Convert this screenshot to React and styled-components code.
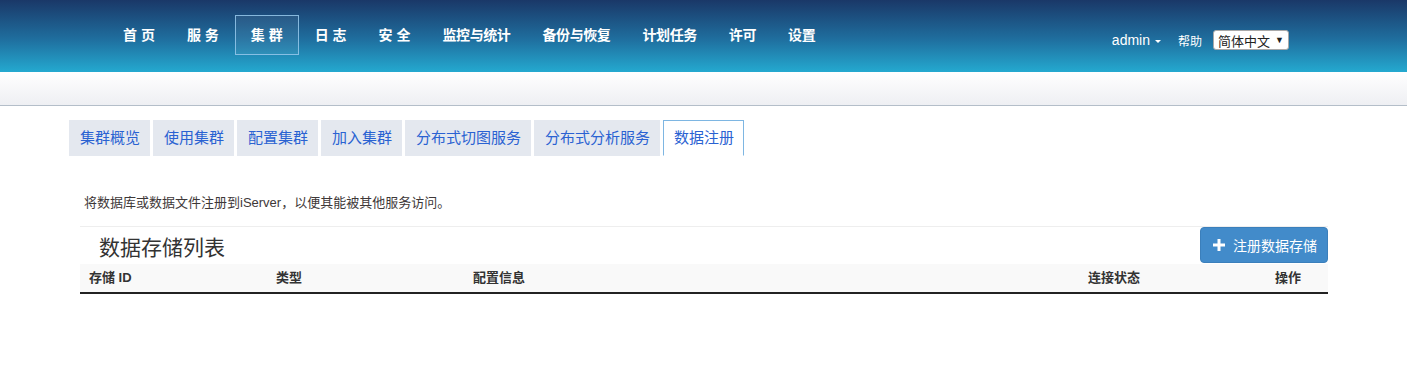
import styled, { createGlobalStyle } from 'styled-components';

const GlobalStyle = createGlobalStyle`
  body {
    margin: 0;
    font-family: "Liberation Sans", "Noto Sans CJK SC", sans-serif;
    font-size: 13px;
    color: #333;
    background: #fff;
  }
`;

const Header = styled.header`
  height: 72px;
  display: flex;
  align-items: center;
  padding: 0 118px 0 107px;
  background: linear-gradient(to bottom, #1a3868 0%, #1f6f9f 55%, #24a9d0 100%);
`;

const Nav = styled.nav`
  display: flex;
  align-items: center;
  margin-top: -2px;
`;

const NavItem = styled.a`
  display: block;
  height: 40px;
  line-height: 38px;
  padding: 0 15px;
  box-sizing: border-box;
  color: #fff;
  font-weight: bold;
  font-size: 14px;
  letter-spacing: ${p => (p.$spaced ? 0 : -0.4)}px;
  white-space: pre;
  border: 1px solid ${p => (p.$active ? 'rgba(150, 200, 235, 0.85)' : 'transparent')};
  background: ${p => (p.$active ? 'rgba(255, 255, 255, 0.06)' : 'transparent')};
  cursor: pointer;
`;

const Right = styled.div`
  margin-left: auto;
  display: flex;
  align-items: center;
  margin-top: 8px;
  color: #fff;
`;

const User = styled.span`
  font-size: 14px;
  display: flex;
  align-items: center;
  gap: 5px;
  margin-right: 17px;
`;

const Caret = styled.span`
  display: inline-block;
  width: 0;
  height: 0;
  border-left: 3px solid transparent;
  border-right: 3px solid transparent;
  border-top: 3px solid #fff;
  margin-top: 2px;
`;

const Help = styled.span`
  font-size: 12px;
  margin-right: 11px;
`;

const LangSelect = styled.div`
  display: flex;
  align-items: center;
  height: 20px;
  width: 76px;
  box-sizing: border-box;
  padding: 0 4px;
  background: #fff;
  border: 1px solid #a9a9a9;
  border-radius: 3px;
  color: #222;
  font-size: 13px;
  justify-content: space-between;
  span:last-child {
    font-size: 9px;
  }
`;

const SubBar = styled.div`
  height: 33px;
  background: linear-gradient(to bottom, #ffffff 0%, #eeeff3 100%);
  border-bottom: 1px solid #b4bec9;
`;

const Tabs = styled.ul`
  list-style: none;
  display: flex;
  gap: 3px;
  margin: 14px 0 0 69px;
  padding: 0;
`;

const Tab = styled.li`
  padding: 7px 9px 7px 10px;
  line-height: 20px;
  font-size: 15px;
  color: #2a62d2;
  background: ${p => (p.$active ? '#fff' : '#e4e8ef')};
  border: 1px solid ${p => (p.$active ? '#7eb6e2' : 'transparent')};
  border-bottom-color: transparent;
  cursor: pointer;
`;

const Panel = styled.section`
  margin: 0 79px 0 80px;
`;

const Desc = styled.p`
  margin: 38px 0 14px 4px;
  font-size: 13px;
  line-height: 18px;
  color: #3e3838;
`;

const Toolbar = styled.div`
  display: flex;
  align-items: center;
  justify-content: space-between;
  border-top: 1px solid #eee;
  height: 36px;
`;

const Title = styled.h3`
  margin: 0 0 0 19px;
  font-size: 21px;
  font-weight: normal;
  color: #333;
  padding-top: 1px;
`;

const PrimaryButton = styled.button`
  display: flex;
  align-items: center;
  gap: 8px;
  height: 36px;
  width: 128px;
  padding: 0 0 0 12px;
  box-sizing: border-box;
  background: #428bca;
  border: 1px solid #3b7fbb;
  border-radius: 4px;
  color: #fff;
  font-family: inherit;
  font-size: 14px;
  white-space: nowrap;
  cursor: pointer;
`;

const Grid = styled.div`
  display: grid;
  grid-template-columns: 186px 197px 615px 187px 63px;
`;

const HeadRow = styled(Grid)`
  background: #f9f9f9;
  border-bottom: 2px solid #222;
  margin-top: 1px;
`;

const Th = styled.div`
  padding: 4px 9px 4px ${p => p.$pl ?? 10}px;
  line-height: 20px;
  font-weight: bold;
  font-size: 13px;
  color: #333;
`;

const PlusIcon = () => (
  <svg width="12" height="12" viewBox="0 0 12 12">
    <rect x="4.5" y="0" width="3" height="12" fill="#fff" />
    <rect x="0" y="4.5" width="12" height="3" fill="#fff" />
  </svg>
);

const navItems = ['首 页', '服 务', '集 群', '日 志', '安 全', '监控与统计', '备份与恢复', '计划任务', '许可', '设置'];
const tabs = ['集群概览', '使用集群', '配置集群', '加入集群', '分布式切图服务', '分布式分析服务', '数据注册'];
const columns = ['存储 ID', '类型', '配置信息', '连接状态', '操作'];

export default function App() {
  return (
    <>
      <GlobalStyle />
      <Header>
        <Nav>
          {navItems.map(item => (
            <NavItem key={item} $active={item === '集 群'} $spaced={item.includes(' ')}>{item}</NavItem>
          ))}
        </Nav>
        <Right>
          <User>admin <Caret /></User>
          <Help>帮助</Help>
          <LangSelect>
            <span>简体中文</span>
            <span>▼</span>
          </LangSelect>
        </Right>
      </Header>
      <SubBar />
      <Tabs>
        {tabs.map((t, i) => (
          <Tab key={t} $active={i === tabs.length - 1}>{t}</Tab>
        ))}
      </Tabs>
      <Panel>
        <Desc>将数据库或数据文件注册到iServer，以便其能被其他服务访问。</Desc>
        <Toolbar>
          <Title>数据存储列表</Title>
          <PrimaryButton><PlusIcon />注册数据存储</PrimaryButton>
        </Toolbar>
        <HeadRow>
          {columns.map((c, i) => (
            <Th key={c} $pl={i === 0 ? 9 : 10}>{c}</Th>
          ))}
        </HeadRow>
      </Panel>
    </>
  );
}
